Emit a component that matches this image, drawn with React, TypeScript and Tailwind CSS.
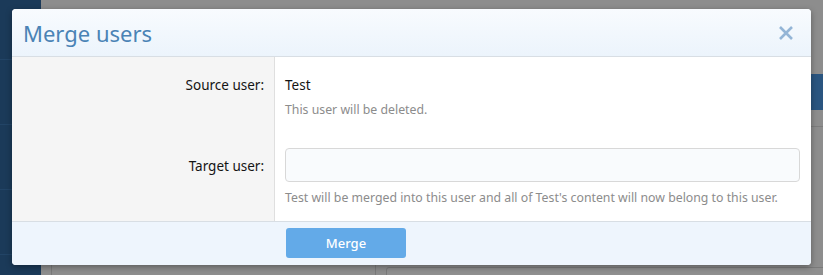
import React from "react";

export default function App() {
  const font = { fontFamily: '"Noto Sans", "Open Sans", sans-serif' };
  return (
    <div className="relative w-[823px] h-[275px] overflow-hidden bg-[#8d8d8d]" style={font}>
      {/* dimmed page behind */}
      <div className="absolute inset-0 flex">
        <div className="w-[41px] h-full bg-[#1b3a59] flex flex-col">
          <div className="h-[60px] border-b border-[#224466]" />
          <div className="h-[65px] border-b border-[#224466]" />
          <div className="h-[65px] border-b border-[#224466]" />
          <div className="h-[65px] border-b border-[#224466]" />
        </div>
        <div className="flex-1 relative">
          <div className="absolute right-0 top-[74px] w-[12px] h-[36px] bg-[#2a5580]" />
          <div className="absolute right-0 top-[126px] w-[12px] border-b border-[#7d7d7d]" />
          <div className="absolute left-[10px] top-[264px] w-[1px] h-[11px] bg-[#7a7a7a]" />
          <div className="absolute left-[334px] top-[264px] w-[1px] h-[11px] bg-[#7a7a7a]" />
          <div className="absolute left-[345px] top-[267px] w-[440px] h-[10px] rounded-t-[3px] border border-[#7a7a7a] bg-[#8f8f8f]" />
        </div>
      </div>

      {/* dialog */}
      <div className="absolute left-[12px] top-[9px] w-[799px] rounded-[4px] overflow-hidden bg-white shadow-[0_2px_6px_rgba(0,0,0,0.35)]">
        <div className="h-[48px] flex items-center justify-between pl-[11px] pr-[17px] bg-gradient-to-b from-[#f8fbfe] to-[#ecf4fc] border-b border-[#d8dee4]">
          <h2 className="text-[22px] leading-none text-[#4a83b5] font-normal">Merge users</h2>
          <svg width="16" height="16" viewBox="0 0 16 16" className="text-[#94b5d6]">
            <path d="M2 2 L14 14 M14 2 L2 14" stroke="currentColor" strokeWidth="2.6" strokeLinecap="butt" />
          </svg>
        </div>

        <div className="flex flex-col">
          <div className="flex">
            <div className="w-[263px] shrink-0 bg-[#f5f5f5] border-r border-[#dfdfdf] pt-[18px] pr-[10px] text-right text-[13.5px] leading-[20px] text-[#141414]">
              Source user:
            </div>
            <div className="flex-1 pl-[10px] pr-[11px] pt-[18px]">
              <div className="text-[13.5px] leading-[20px] text-[#141414]">Test</div>
              <div className="mt-[6px] text-[12.3px] leading-[18px] text-[#8c8c8c]">This user will be deleted.</div>
            </div>
          </div>
          <div className="flex">
            <div className="w-[263px] shrink-0 bg-[#f5f5f5] border-r border-[#dfdfdf] pt-[37px] pr-[10px] text-right text-[13.5px] leading-[20px] text-[#141414]">
              Target user:
            </div>
            <div className="flex-1 pl-[10px] pr-[11px] pt-[29px] pb-[14px]">
              <input className="block w-full h-[34px] rounded-[4px] border border-[#d8d8d8] bg-[#f9fbfd] outline-none" />
              <div className="mt-[7px] text-[12.3px] leading-[18px] text-[#8c8c8c]">
                Test will be merged into this user and all of Test's content will now belong to this user.
              </div>
            </div>
          </div>
        </div>

        <div className="h-[44px] border-t border-[#d8dee4] bg-[#eef5fd] flex items-start pl-[274px] pt-[6px]">
          <button className="w-[120px] h-[30px] rounded-[3px] bg-[#63aae8] text-white text-[13px] font-medium leading-none">
            Merge
          </button>
        </div>
      </div>
    </div>
  );
}
